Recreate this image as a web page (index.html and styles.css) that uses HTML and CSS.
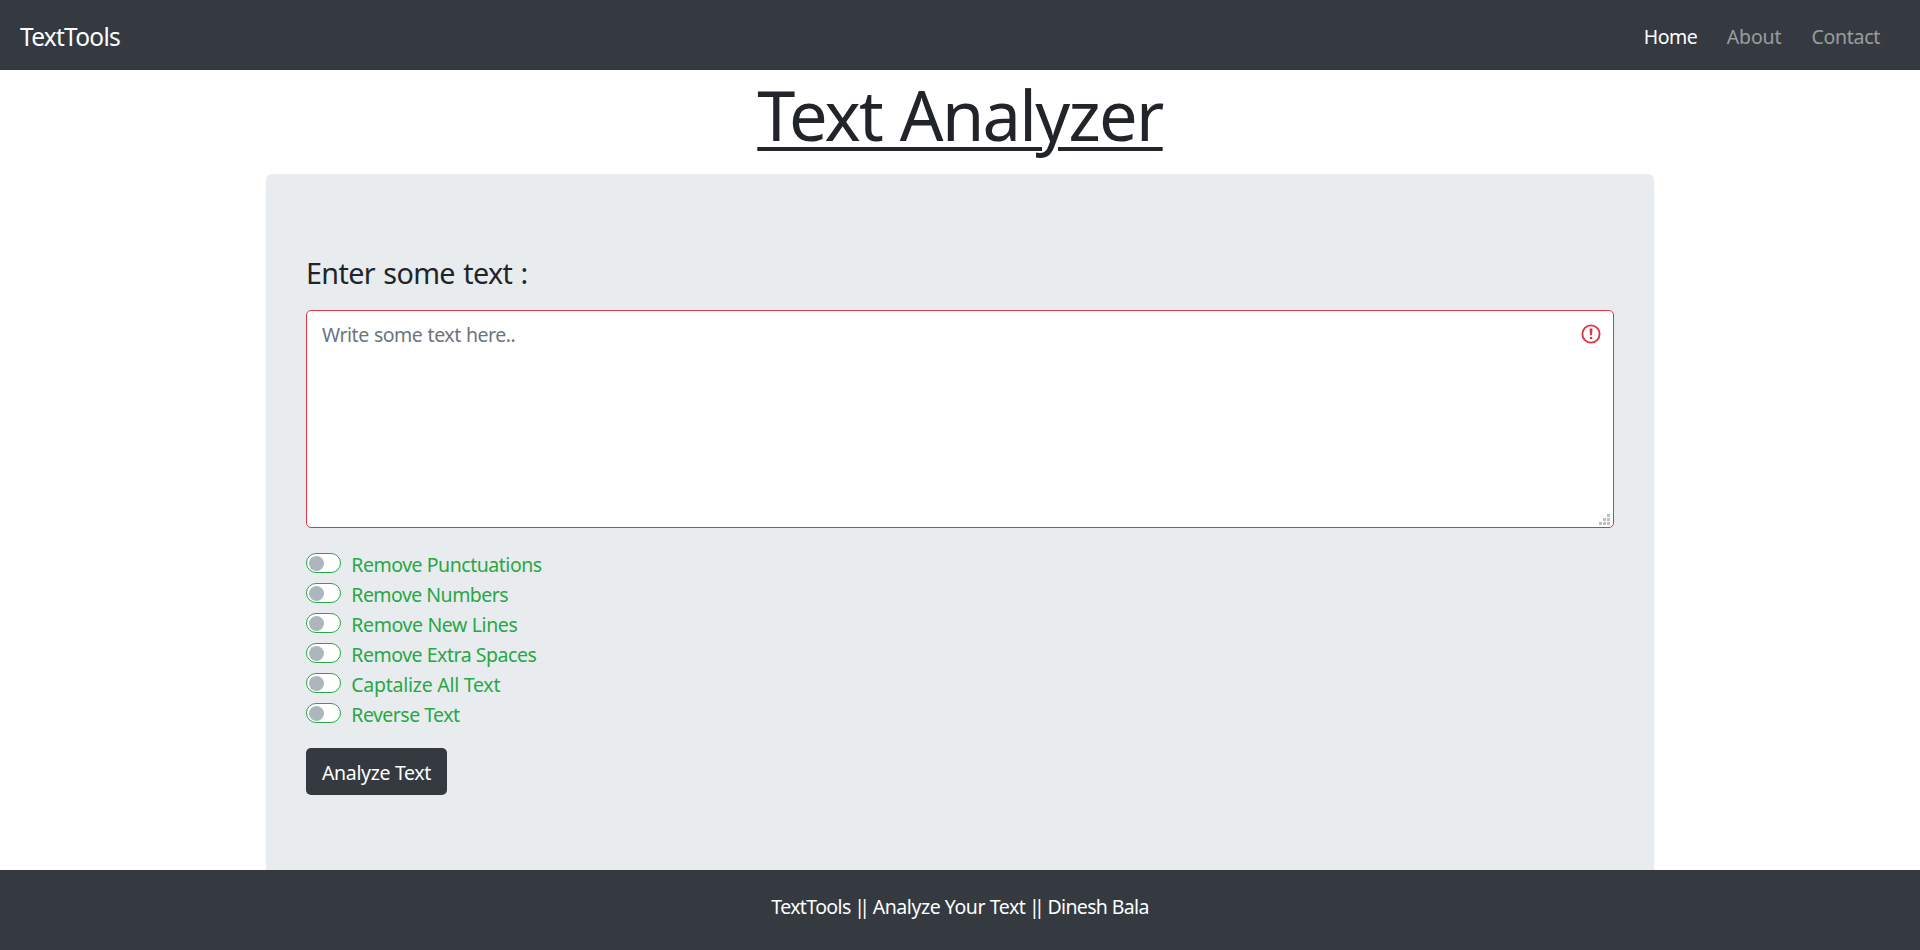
FILE: index.html
```html
<!DOCTYPE html>
<html lang="en">
<head>
<meta charset="utf-8">
<title>TextTools</title>
<link rel="stylesheet" href="styles.css">
</head>
<body>
<nav class="navbar">
  <a class="brand">TextTools</a>
  <div class="nav-links">
    <a class="nav-link active">Home</a>
    <a class="nav-link about">About</a>
    <a class="nav-link contact">Contact</a>
  </div>
</nav>
<h1 class="title">Text Analyzer</h1>
<main class="card">
  <h4 class="label">Enter some text :</h4>
  <div class="field">
    <span class="placeholder">Write some text here..</span>
    <svg class="alert" viewBox="0 0 20 20"><circle cx="10" cy="10" r="8.6" fill="none" stroke="#dc3545" stroke-width="1.9"/><path d="M8.5 4.5h3l-.5 6.7H9z" fill="#dc3545"/><circle cx="10" cy="14" r="1.3" fill="#dc3545"/></svg>
    <svg class="grip" viewBox="0 0 11 11" shape-rendering="crispEdges"><path fill="#c0c0c0" d="M8 0h3v3H8zM4 4h3v3H4zM8 4h3v3H8zM0 8h3v3H0zM4 8h3v3H4zM8 8h3v3H8z"/></svg>
  </div>
  <ul class="options">
    <li class="option"><i class="switch"></i><span>Remove Punctuations</span></li>
    <li class="option"><i class="switch"></i><span class="tight">Remove Numbers</span></li>
    <li class="option"><i class="switch"></i><span class="loose">Remove New Lines</span></li>
    <li class="option"><i class="switch"></i><span>Remove Extra Spaces</span></li>
    <li class="option"><i class="switch"></i><span class="looser">Captalize All Text</span></li>
    <li class="option"><i class="switch"></i><span class="tight">Reverse Text</span></li>
  </ul>
  <button class="button">Analyze Text</button>
</main>
<footer class="footer"><span class="site">TextTools</span> <span class="bar">||</span> <span class="tagline">Analyze Your Text</span> <span class="bar">||</span> <span class="author">Dinesh Bala</span></footer>
</body>
</html>
```
FILE: styles.css
```css
* { box-sizing: border-box; }

body {
  margin: 0;
  height: 950px;
  overflow: hidden;
  display: flex;
  flex-direction: column;
  background: #fff;
  color: #212529;
  font-family: "Noto Sans", "Open Sans", sans-serif;
  font-size: 19.5px;
  line-height: 30px;
}

.navbar {
  flex: none;
  display: flex;
  justify-content: space-between;
  align-items: center;
  height: 70px;
  padding: 4px 30px 0 20px;
  background: #343a40;
}

.brand { color: #fff; font-size: 24.5px; letter-spacing: -.74px; }
.nav-links { display: flex; }
.nav-link { padding: 0 10px; margin-left: 10px; color: rgba(255, 255, 255, .5); }
.nav-link.active { margin-right: -.5px; color: #fff; letter-spacing: -.5px; }
.nav-link.about { letter-spacing: -.15px; }
.nav-link.contact { letter-spacing: -.28px; }

.title {
  flex: none;
  height: 104px;
  margin: 0;
  text-align: center;
  font-size: 68.5px;
  font-weight: 400;
  line-height: 90px;
  letter-spacing: -1.68px;
  word-spacing: 1.6px;
  text-decoration: underline;
  text-decoration-thickness: 4px;
  text-underline-offset: 6px;
}

.card {
  flex: 1;
  width: 1388px;
  margin: 0 auto;
  padding: 80px 40px 0;
  background: #e9ecef;
  border-radius: 6px 6px 0 0;
}

.label {
  margin: 0 0 16px;
  height: 40px;
  font-size: 28.7px;
  font-weight: 400;
  line-height: 38px;
  letter-spacing: -.62px;
  word-spacing: 1.5px;
}

.field {
  position: relative;
  height: 218px;
  padding: 9px 15px;
  background: #fff;
  border: 1px solid #dc3545;
  border-radius: 5px;
}
.placeholder { color: #6c757d; letter-spacing: -.47px; word-spacing: .6px; }
.alert { position: absolute; right: 12.5px; top: 12.5px; width: 20px; height: 20px; }
.grip { position: absolute; right: 3px; bottom: 2px; width: 11px; height: 11px; }

.options { margin: 20px 0 0; padding: 0; list-style: none; color: #28a745; letter-spacing: -.47px; }
.option { display: flex; height: 30px; padding-top: 2px; }
.tight { letter-spacing: -.53px; }
.loose { letter-spacing: -.38px; }
.looser { letter-spacing: -.26px; }

.switch {
  flex: none;
  width: 35px;
  height: 20px;
  margin: 3px 10.3px 0 0;
  padding: 2px;
  background: #fff;
  border: 1px solid #28a745;
  border-radius: 10px;
}
.switch::before {
  content: "";
  display: block;
  width: 15px;
  height: 15px;
  background: #adb5bd;
  border-radius: 50%;
}

.button {
  display: block;
  width: 141px;
  height: 47px;
  margin: 20px 0 0;
  padding: 3px 0 0 16px;
  border: 0;
  border-radius: 5px;
  background: #343a40;
  color: #fff;
  font: inherit;
  letter-spacing: -.34px;
  text-align: left;
}

.footer {
  flex: none;
  display: flex;
  justify-content: center;
  gap: 6.1px;
  height: 80px;
  padding-top: 22px;
  background: #343a40;
  color: #fff;
}
.site { letter-spacing: -.62px; }
.bar { margin: 0 2.4px 0 -2.4px; letter-spacing: -5.8px; }
.tagline { letter-spacing: -.44px; }
.author { letter-spacing: -.65px; }
```
